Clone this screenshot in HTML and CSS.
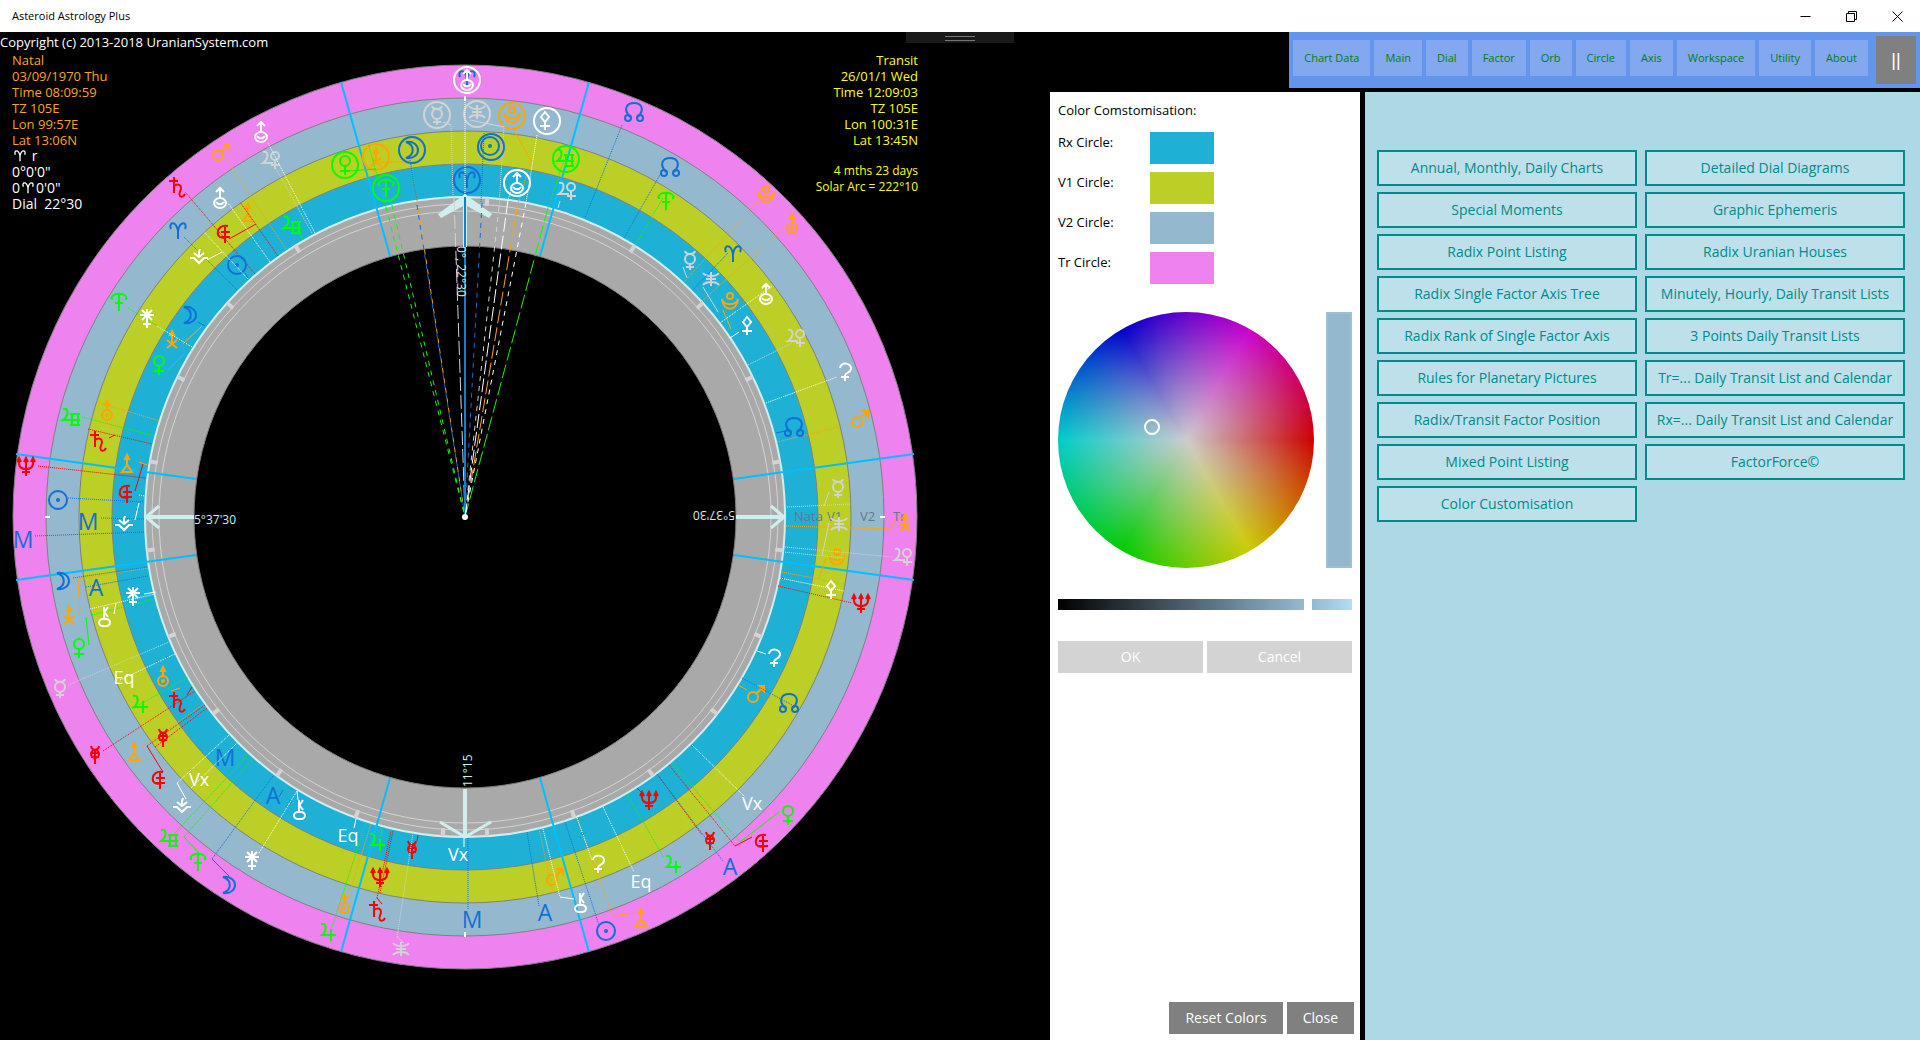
FILE: index.html
```html
<!DOCTYPE html>
<html lang="en">
<head>
<meta charset="utf-8">
<title>Asteroid Astrology Plus</title>
<link rel="stylesheet" href="styles.css">
</head>
<body>
<header class="titlebar">
  <h1 class="titlebar-name">Asteroid Astrology Plus</h1>
  <div class="window-buttons">
    <button class="window-button" aria-label="Minimize"><svg width="11" height="11" viewBox="0 0 11 11"><path d="M0.500 5.500H10.500"/></svg></button>
    <button class="window-button" aria-label="Restore"><svg width="11" height="11" viewBox="0 0 11 11"><path d="M.5 2.500H8.500V10.500H.5ZM2.500 2.500V.5H10.500V8.500H8.500"/></svg></button>
    <button class="window-button" aria-label="Close window"><svg width="11" height="11" viewBox="0 0 11 11"><path d="M.5.5L10.500 10.500M10.500.5L.5 10.500"/></svg></button>
  </div>
</header>
<main class="workspace">
  <section class="chart-pane" aria-label="Dial chart">
    <svg class="dial" viewBox="0 32 1050 1008" role="img" aria-label="22°30 dial with radix, V1, V2 and transit circles">
      <defs>
        <g id="sun"><circle r="9"/><circle r="1" class="dot"/></g>
        <g id="moon"><path d="M-6-8C10-10 10 10-6 8C3 5 3-5-6-8Z"/></g>
        <g id="mercury"><circle cy="-1" r="5"/><path d="M-5-9C-4-5 4-5 5-9M0 4V10M-4 7H4"/></g>
        <g id="venus"><circle cy="-4" r="5"/><path d="M0 1V10M-5 6H5"/></g>
        <g id="mars"><circle cx="-3" cy="3" r="5"/><path d="M1-1L8-8M3-8L8-8L8-3Z"/></g>
        <g id="jupiter"><path d="M-7-8C-1-10-1-1-6 3H8M3-3V9"/></g>
        <g id="saturn"><path d="M-9-7H0M-4-11V5M-4-2C0-5 3-3 3 0C3 3 0 5 2 8C4 10 6 8 7 6"/></g>
        <g id="uranus"><circle cy="5" r="5"/><circle cy="5" r="1" class="dot"/><path d="M0 0V-7M-2-5L0-9L2-5Z"/></g>
        <g id="neptune"><path d="M0-9V9M-4 5H4M-7-8C-8 0-5 2 0 2C5 2 8 0 7-8M-9-5L-7-9L-5-5M5-5L7-9L9-5M-2-5L0-9L2-5"/></g>
        <g id="pluto"><circle cy="-6" r="3"/><path d="M-8-3C-6 4 6 4 8-3C7 10-7 10-8-3"/></g>
        <g id="node"><path d="M-4 5C-12-4-6-9 0-9C6-9 12-4 4 5"/><circle cx="-6" cy="6" r="3"/><circle cx="6" cy="6" r="3"/></g>
        <g id="aries"><path d="M-7-2C-10-9-2-11 0 0V8V0C2-11 10-9 7-2"/></g>
        <g id="cupido"><path d="M-8-8C-2-10-2-1-8 3H2"/><circle cx="4" cy="-4" r="4"/><path d="M4 0V9M0 5H9"/></g>
        <g id="hades"><path d="M5-7C-8-10-9 9 4 4M2-6V10M-2-1H7M-2 4H7"/></g>
        <g id="zeus"><path d="M0-3V5M-2-4L0-8L2-4ZM-5 1L5 9M-5 9L0 5L5 1"/></g>
        <g id="kronos"><path d="M-8-3C-7-10 7-10 8-3M-8-3H-6M8-3H6M0-8V9M-4 1H4"/></g>
        <g id="apollon"><path d="M-8-8C-2-10-2-1-8 3H1M-1-3H9M-1 8H9M1-3V8M7-3V8M-1 3H9"/></g>
        <g id="admetos"><circle cy="0" r="4"/><path d="M-4-8C-3-3 3-3 4-8M0-3V10M-4-1H4M-4 3H4"/></g>
        <g id="vulkanus"><path d="M0-4V1M-2-5L0-9L2-5ZM-5 8L0 1L5 8Z"/></g>
        <g id="poseidon"><path d="M-8-6C-5-2 5-2 8-6M-8 6C-5 2 5 2 8 6M0-7V7M-5 0H5"/></g>
        <g id="ceres"><path d="M-5-4C-4-11 7-9 6-3C5 2 0 0 0 4V9M-4 5H4"/></g>
        <g id="pallas"><path d="M0-9L4-4L0 1L-4-4ZM0 1V9M-5 5H5"/></g>
        <g id="juno"><path d="M0-9V10M-7-3H7M-5-8L5 2M5-8L-5 2M-4 6H4"/></g>
        <g id="vesta"><path d="M-9 1H-5L0 6L5 1H9M-5-4L0 0L5-4M0-1V-5L1-8"/></g>
        <g id="chiron"><rect x="-5" y="2" width="11" height="7" rx="4"/><path d="M0 2V-10M0-4L4-10M1-4L4 0"/></g>
        <g id="earth"><ellipse cy="5" rx="6" ry="5"/><path d="M0 1V-9M-4-6L0-10L4-6M-4 4C-2 7 2 7 4 4"/></g>
        <g id="halo"><circle r="13"/></g>
        <g id="major"><path d="M0-312V-320"/></g>
      </defs>

      <g class="rings">
        <circle class="ring-tr" cx="465" cy="517" r="452"/>
        <circle class="ring-v2" cx="465" cy="517" r="419"/>
        <circle class="ring-v1" cx="465" cy="517" r="386"/>
        <circle class="ring-rx" cx="465" cy="517" r="353"/>
        <circle class="ring-dial" cx="465" cy="517" r="320"/>
        <circle class="ring-line" cx="465" cy="517" r="313"/>
        <circle class="ring-line" cx="465" cy="517" r="306"/>
        <circle class="ring-core" cx="465" cy="517" r="271"/>
      </g>

      <g class="ticks" transform="translate(465 517)">
        <use href="#major" transform="rotate(4)"/><use href="#major" transform="rotate(32)"/><use href="#major" transform="rotate(48)"/><use href="#major" transform="rotate(64)"/><use href="#major" transform="rotate(80)"/><use href="#major" transform="rotate(96)"/><use href="#major" transform="rotate(112)"/><use href="#major" transform="rotate(128)"/><use href="#major" transform="rotate(144)"/><use href="#major" transform="rotate(160)"/><use href="#major" transform="rotate(176)"/>
        <use href="#major" transform="rotate(184)"/><use href="#major" transform="rotate(200)"/><use href="#major" transform="rotate(216)"/><use href="#major" transform="rotate(232)"/><use href="#major" transform="rotate(248)"/><use href="#major" transform="rotate(264)"/><use href="#major" transform="rotate(280)"/><use href="#major" transform="rotate(296)"/><use href="#major" transform="rotate(312)"/><use href="#major" transform="rotate(328)"/>
      </g>

      <g class="spokes"><path d="M341 82L390 256M589 82L540 256M341 952L390 778M589 952L540 778M16 454L196 479M914 454L734 479M16 580L196 555M914 580L734 555"/></g>

      <g class="pointers">
        <path d="M465 198V247M465 789V837M146 517H194M736 517H784"/>
        <path class="barb" d="M440 822L465 837L491 822M159 506L146 517L159 528M771 506L784 517L771 528"/>
        <path class="arrow-head" d="M465 194L492 214L489 218L465 205L441 218L438 214Z"/>
      </g>

      <g class="ring-names"><text x="794" y="521">Nata</text><text x="827" y="521">V1</text><text x="860" y="521">V2</text><text x="893" y="521">Tr</text></g>
      <path class="edge-marks" d="M45 517H50M880 517H885M465 932V937M465 96V101"/>

      <g class="orange">
        <path class="dots" d="M286 249L226 159M97 402L160 421M78 579L148 568M142 747L204 704M348 897L371 824M539 829L553 893M577 818L613 916M777 442L851 424M786 526L890 529M782 572L845 584M757 202L684 282M784 228L701 302M411 163L417 200M531 161L518 203"/>
        <path class="lead" d="M183 344L202 326M78 579L80 612M613 916L634 913M890 529L895 520M819 579L826 558M723 310L731 329M380 162H411M512 127L531 161M139 462L147 465M171 691L180 688M738 685L747 690"/>
        <path class="ray-long" d="M518 203L465 517"/><path class="ray-short" d="M417 200L465 517"/>
        <use href="#mars" x="221" y="152"/><use href="#vulkanus" x="248" y="213"/><use href="#zeus" x="172" y="339"/><use href="#zeus" x="376" y="157"/><use href="#halo" x="376" y="157"/><use href="#pluto" x="512" y="116"/><use href="#halo" x="512" y="116"/><use href="#pluto" x="766" y="195"/><use href="#uranus" x="792" y="223"/><use href="#pluto" x="730" y="302"/><use href="#uranus" x="107" y="410"/><use href="#vulkanus" x="127" y="464"/><use href="#zeus" x="69" y="615"/><use href="#uranus" x="163" y="676"/><use href="#vulkanus" x="134" y="752"/><use href="#uranus" x="344" y="903"/><use href="#mars" x="555" y="877"/><use href="#vulkanus" x="641" y="918"/><use href="#mars" x="756" y="694"/><use href="#mars" x="860" y="419"/><use href="#zeus" x="905" y="522"/><use href="#pluto" x="837" y="558"/>
      </g>

      <g class="green">
        <path class="dots" d="M192 347L128 308M82 417L154 436M92 615L154 599M132 709L188 677M175 833L247 756M184 837L253 759M332 927L366 822M627 794L664 858M672 763L740 842M663 198L635 246M368 143L386 207M381 190L392 205M563 163L548 208"/>
        <path class="lead" d="M168 370L185 353M86 617L89 645M184 837L199 853M740 842L779 812M349 171L376 169M382 827L381 837M299 233L303 240"/>
        <path class="ray-short" d="M386 207L465 517M392 205L465 517"/><path class="ray-long" d="M548 208L465 517"/>
        <use href="#apollon" x="292" y="225"/><use href="#kronos" x="119" y="302"/><use href="#venus" x="345" y="165"/><use href="#halo" x="345" y="165"/><use href="#kronos" x="386" y="188"/><use href="#halo" x="386" y="188"/><use href="#apollon" x="565" y="158"/><use href="#halo" x="566" y="159"/><use href="#kronos" x="666" y="201"/><use href="#venus" x="159" y="365"/><use href="#apollon" x="71" y="417"/><use href="#venus" x="79" y="648"/><use href="#jupiter" x="140" y="704"/><use href="#apollon" x="169" y="838"/><use href="#kronos" x="198" y="862"/><use href="#jupiter" x="377" y="842"/><use href="#jupiter" x="328" y="932"/><use href="#jupiter" x="673" y="864"/><use href="#venus" x="788" y="815"/>
      </g>

      <g class="red">
        <path class="dots" d="M278 256L240 202M255 274L185 192M88 429L152 444M38 466L146 478M103 751L195 691M147 746L205 705M155 747L207 708M380 893L393 831M377 898L391 831M657 774L702 835M669 765L735 846M778 586L852 603"/>
        <path class="lead" d="M229 239L256 224M109 438L115 435M135 491L143 464M147 746L163 772M735 846L752 837M377 898L382 904M187 695L192 687M418 835L417 841M637 788L641 792"/>
        <use href="#saturn" x="178" y="188"/><use href="#hades" x="223" y="233"/><use href="#saturn" x="99" y="442"/><use href="#neptune" x="26" y="467"/><use href="#hades" x="125" y="493"/><use href="#saturn" x="178" y="703"/><use href="#admetos" x="163" y="737"/><use href="#admetos" x="95" y="754"/><use href="#hades" x="158" y="779"/><use href="#admetos" x="412" y="849"/><use href="#neptune" x="380" y="878"/><use href="#saturn" x="378" y="912"/><use href="#neptune" x="649" y="801"/><use href="#admetos" x="710" y="840"/><use href="#hades" x="761" y="842"/><use href="#neptune" x="861" y="604"/>
      </g>

      <g class="silver">
        <path class="dots" d="M312 233L275 167M453 195L451 126M504 126L499 207M68 685L169 642M397 937L413 833M748 365L792 343M787 507L851 504M785 547L893 557M783 552L845 558"/>
        <path class="lead" d="M443 122L451 125M470 120L504 127M683 267L687 278M703 287L718 312M397 937L404 943M824 506L829 492M822 556L829 523M560 201L558 208"/>
        <path class="ray-long" d="M454 197L465 517"/><path class="ray-short" d="M499 207L465 517"/>
        <use href="#cupido" x="271" y="160"/><use href="#mercury" x="437" y="115"/><use href="#halo" x="437" y="115"/><use href="#poseidon" x="477" y="112"/><use href="#halo" x="477" y="114"/><use href="#cupido" x="567" y="191"/><use href="#mercury" x="690" y="260"/><use href="#poseidon" x="711" y="279"/><use href="#cupido" x="796" y="338"/><use href="#mercury" x="60" y="688"/><use href="#poseidon" x="401" y="949"/><use href="#mercury" x="838" y="488"/><use href="#poseidon" x="839" y="524"/><use href="#cupido" x="903" y="557"/>
      </g>

      <g class="blue">
        <path class="dots" d="M237 290L184 237M68 498L144 502M101 518L145 519M35 536L144 532M73 578L147 567M86 587L148 576M212 859L273 776M468 838L468 910M527 832L539 906M565 822L599 925M657 774L723 861M742 678L792 705M622 125L585 218M661 173L624 238M728 253L692 291M410 160L417 200M484 133L481 203"/>
        <path class="lead" d="M212 859L229 876M245 273L248 278M198 322L205 326M283 790L279 797M776 433L785 431"/>
        <path class="ray-short" d="M482 203L465 517M417 205L465 517"/>
        <path class="needle" d="M465 197V517"/>
        <use href="#aries" x="178" y="231"/><use href="#sun" x="237" y="265"/><use href="#moon" x="190" y="315"/><use href="#moon" x="412" y="150"/><use href="#halo" x="412" y="150"/><use href="#aries" x="467" y="180"/><use href="#halo" x="467" y="180"/><use href="#sun" x="490" y="146"/><use href="#halo" x="491" y="147"/><use href="#node" x="634" y="112"/><use href="#node" x="670" y="167"/><use href="#aries" x="733" y="254"/><use href="#sun" x="58" y="500"/><use href="#moon" x="63" y="581"/><use href="#moon" x="229" y="885"/><use href="#sun" x="606" y="931"/><use href="#node" x="789" y="703"/><use href="#node" x="794" y="427"/><use href="#aries" x="467" y="79"/>
        <text x="88" y="530">M</text><text x="23" y="548">M</text><text x="96" y="596">A</text><text x="225" y="766">M</text><text x="273" y="804">A</text><text x="472" y="928">M</text><text x="545" y="921">A</text><text x="730" y="875">A</text>
      </g>

      <g class="white">
        <path class="dots" d="M315 233L268 143M270 262L228 203M248 279L204 232M192 347L157 326M139 495L145 496M90 609L155 594M120 680L175 654M177 783L229 735M191 788L237 743M259 853L297 791M543 829L560 897M577 818L592 860M603 807L634 872M692 745L745 797M772 286L720 323M766 403L837 377M780 578L844 591M465 195V95M537 135L526 203M511 190L508 200"/>
        <path class="lead" d="M207 260L222 252M135 520L139 503M116 603L114 614M177 783L186 799M297 791L298 800M356 819L354 828M464 838V847M560 897L574 899M730 338L739 332M757 651L766 654M144 594L156 592"/>
        <path class="ray-long" d="M508 200L465 517"/><path class="ray-short" d="M526 203L465 517"/>
        <g class="bold"><use href="#earth" x="261" y="132"/><use href="#earth" x="220" y="198"/><use href="#vesta" x="199" y="257"/><use href="#juno" x="147" y="318"/><use href="#earth" x="467" y="80"/><use href="#halo" x="467" y="80"/><use href="#pallas" x="545" y="121"/><use href="#halo" x="547" y="121"/><use href="#earth" x="517" y="183"/><use href="#halo" x="517" y="183"/><use href="#earth" x="766" y="294"/><use href="#pallas" x="747" y="326"/><use href="#ceres" x="845" y="372"/><use href="#vesta" x="124" y="524"/><use href="#juno" x="133" y="596"/><use href="#chiron" x="104" y="617"/><use href="#chiron" x="299" y="810"/><use href="#vesta" x="182" y="806"/><use href="#juno" x="252" y="860"/><use href="#chiron" x="580" y="903"/><use href="#ceres" x="598" y="864"/><use href="#ceres" x="774" y="658"/><use href="#pallas" x="831" y="590"/></g>
        <text x="124" y="684">Eq</text><text x="199" y="786">Vx</text><text x="348" y="842">Eq</text><text x="458" y="861">Vx</text><text x="641" y="888">Eq</text><text x="752" y="810">Vx</text>
        <circle class="hub" cx="465" cy="517" r="2"/>
      </g>

      <g class="degrees">
        <text x="194" y="524">5°37'30</text>
        <text transform="translate(735 511) rotate(180)">5°37'30</text>
        <text transform="translate(472 787) rotate(-90)">11°15</text>
        <text transform="translate(457 246) rotate(90)">0°, 22°30</text>
      </g>
    </svg>
    <p class="copyright">Copyright (c) 2013-2018 UranianSystem.com</p>
    <div class="natal">
      <p>Natal</p><p>03/09/1970 Thu</p><p>Time 08:09:59</p><p>TZ 105E</p><p>Lon 99:57E</p><p>Lat 13:06N</p>
      <div class="reading">
        <p><svg class="sign" viewBox="-9 -9 18 18" role="img" aria-label="Aries"><use href="#aries"/></svg> r</p><p>0°0'0"</p><p>0<svg class="sign" viewBox="-9 -9 18 18" role="img" aria-label="Aries"><use href="#aries"/></svg>0'0"</p><p>Dial&nbsp; 22°30</p>
      </div>
    </div>
    <div class="transit">
      <p>Transit</p><p>26/01/1 Wed</p><p>Time 12:09:03</p><p>TZ 105E</p><p>Lon 100:31E</p><p>Lat 13:45N</p>
      <div class="arc"><p>4 mths 23 days</p><p>Solar Arc = 222°10</p></div>
    </div>
    <div class="grip"></div>
  </section>

  <nav class="menu" aria-label="Main menu">
    <button class="menu-item">Chart Data</button><button class="menu-item">Main</button><button class="menu-item">Dial</button><button class="menu-item">Factor</button><button class="menu-item">Orb</button><button class="menu-item">Circle</button><button class="menu-item">Axis</button><button class="menu-item">Workspace</button><button class="menu-item">Utility</button><button class="menu-item">About</button>
    <button class="pause">||</button>
  </nav>

  <section class="colors">
    <h2 class="colors-title">Color Comstomisation:</h2>
    <div class="swatches">
      <label for="rx">Rx Circle:</label><button id="rx" class="swatch rx" aria-label="Rx Circle"></button>
      <label for="v1">V1 Circle:</label><button id="v1" class="swatch v1" aria-label="V1 Circle"></button>
      <label for="v2">V2 Circle:</label><button id="v2" class="swatch v2" aria-label="V2 Circle"></button>
      <label for="tr">Tr Circle:</label><button id="tr" class="swatch tr" aria-label="Tr Circle"></button>
    </div>
    <div class="picker">
      <div class="wheel"><span class="wheel-mark"></span></div>
      <input type="range" class="opacity" aria-label="Opacity" value="100">
    </div>
    <div class="levels">
      <input type="range" class="level dark" aria-label="Shade">
      <input type="range" class="level light" aria-label="Tint">
    </div>
    <div class="confirm"><button class="confirm-button">OK</button><button class="confirm-button">Cancel</button></div>
    <div class="panel-actions"><button class="action">Reset Colors</button><button class="action">Close</button></div>
  </section>

  <section class="tools" aria-label="Workspace tools">
    <div class="tool-column">
      <button class="tool">Annual, Monthly, Daily Charts</button>
      <button class="tool">Special Moments</button>
      <button class="tool">Radix Point Listing</button>
      <button class="tool">Radix Single Factor Axis Tree</button>
      <button class="tool">Radix Rank of Single Factor Axis</button>
      <button class="tool">Rules for Planetary Pictures</button>
      <button class="tool">Radix/Transit Factor Position</button>
      <button class="tool">Mixed Point Listing</button>
      <button class="tool">Color Customisation</button>
    </div>
    <div class="tool-column">
      <button class="tool">Detailed Dial Diagrams</button>
      <button class="tool">Graphic Ephemeris</button>
      <button class="tool">Radix Uranian Houses</button>
      <button class="tool">Minutely, Hourly, Daily Transit Lists</button>
      <button class="tool">3 Points Daily Transit Lists</button>
      <button class="tool">Tr=... Daily Transit List and Calendar</button>
      <button class="tool">Rx=... Daily Transit List and Calendar</button>
      <button class="tool">FactorForce©</button>
    </div>
  </section>
</main>
</body>
</html>
```
FILE: styles.css
```css
* { box-sizing: border-box; }
body {
  margin: 0;
  min-height: 100vh;
  display: flex;
  flex-direction: column;
  background: #000;
  font-family: "Open Sans", "Noto Sans", sans-serif;
  font-size: 13px;
  line-height: 16px;
}
h1, h2, p { margin: 0; font-weight: 400; }
button { border: 0; margin: 0; padding: 0; font: inherit; }

.titlebar { display: flex; justify-content: space-between; align-items: center; height: 32px; background: #fff; }
.titlebar-name { padding-left: 12px; font-size: 11px; }
.window-buttons { display: flex; }
.window-button { width: 46px; height: 32px; background: none; display: grid; place-items: center; }
.window-button svg { fill: none; stroke: #000; }

.workspace {
  flex: 1;
  display: grid;
  grid-template-columns: minmax(0, 1fr) 310px 560px;
  grid-template-rows: 56px 1fr;
  row-gap: 4px;
  grid-template-areas: "chart menu menu" "chart colors tools";
}
.chart-pane { grid-area: chart; position: relative; color: #fff; }
.dial { display: block; width: 100%; height: auto; }
.copyright { position: absolute; left: 0; top: 2px; }
.natal { position: absolute; left: 12px; top: 20px; color: orange; }
.reading { color: #fff; font-size: 14px; }
.transit { position: absolute; right: 132px; top: 20px; color: #ff0; text-align: right; }
.arc { padding-top: 15px; font-size: 12px; }
.sign { width: 16px; height: 12px; vertical-align: -1px; fill: none; stroke: #fff; stroke-width: 2px; }
.grip { position: absolute; right: 36px; top: 0; width: 108px; height: 11px; background: #1a1a1a; }
.grip::after { content: ""; display: block; width: 30px; height: 3px; margin: 4px auto 0; border: solid #777; border-width: 1px 0; }

.menu { grid-area: menu; justify-self: end; display: flex; align-items: flex-start; gap: 4px; padding: 4px; background: #6495ed; }
.menu-item { height: 36px; margin-top: 4px; padding: 0 11px; background: #83a8f0; color: #007f0e; font-size: 11px; }
.pause { width: 40px; height: 48px; margin-left: 4px; background: gray; color: #fff; font-family: "Liberation Sans", sans-serif; font-size: 18px; }

.colors { grid-area: colors; display: flex; flex-direction: column; padding: 8px 8px 6px; background: #fff; color: #000; }
.colors-title { font-size: 13px; line-height: 20px; }
.swatches { display: grid; grid-template-columns: 92px 64px; row-gap: 8px; margin-top: 12px; line-height: 20px; }
.swatch { height: 32px; }
.rx { background: #1fb1d5; }
.v1 { background: #bbcf26; }
.v2 { background: #94b9cf; }
.tr { background: #ee82ee; }
.picker { display: flex; justify-content: space-between; margin-top: 28px; }
.wheel {
  position: relative;
  width: 256px;
  height: 256px;
  border-radius: 50%;
  background:
    radial-gradient(closest-side, #ccc, rgba(204, 204, 204, 0)),
    conic-gradient(from 90deg, #cc0000, #cccc00, #00cc00, #00cccc, #0000cc, #cc00cc, #cc0000);
}
.wheel-mark { position: absolute; left: 86px; top: 107px; width: 16px; height: 16px; border: 2px solid #fff; border-radius: 50%; }
input[type="range"] { appearance: none; margin: 0; }
input[type="range"]::-webkit-slider-thumb { appearance: none; width: 0; height: 0; }
.opacity { width: 26px; height: 256px; background: #94b9cf; border: 2px solid #9dc0d5; }
.levels { display: flex; gap: 8px; margin-top: 31px; }
.level { height: 11px; min-width: 0; }
.dark { flex: 1; background: linear-gradient(90deg, #000, #94b9cf); }
.light { width: 40px; background: linear-gradient(90deg, #94b9cf, #b0def5); }
.confirm { display: flex; gap: 4px; margin-top: 31px; }
.confirm-button { flex: 1; height: 32px; background: #d3d3d3; color: #fff; font-size: 14px; }
.panel-actions { display: flex; justify-content: flex-end; gap: 4px; margin-top: auto; margin-right: -2px; }
.action { height: 32px; padding: 0 16px; background: gray; color: #fff; font-size: 14px; }

.tools { grid-area: tools; display: flex; align-items: flex-start; gap: 8px; margin-left: 5px; padding: 58px 15px 8px 12px; background: #add8e6; }
.tool-column { flex: 1; display: flex; flex-direction: column; gap: 6px; }
.tool { height: 36px; border: 2px solid #008b8b; background: #bde0ea; color: #008b8b; font-size: 14px; white-space: nowrap; }

.dial use, .dial path { fill: none; }
.rings circle { stroke: gray; }
.ring-tr { fill: #ee82ee; }
.ring-v2 { fill: #94b9cf; }
.ring-v1 { fill: #bbcf26; }
.ring-rx { fill: #1fb1d5; }
.rings .ring-dial { fill: #a9a9a9; stroke: #d0eeee; stroke-width: 2px; }
.rings .ring-line { fill: none; stroke: #d3d3d3; }
.ring-core { fill: #000; }
.ticks { stroke: #d3d3d3; stroke-width: 4px; fill: none; }
.spokes { stroke: #00bfff; stroke-width: 2px; }
.pointers { stroke: #d0eeee; stroke-width: 4px; }
.barb { stroke-width: 3px; }
.dial .arrow-head { fill: #d0eeee; stroke: none; }
.edge-marks { stroke: #fff; stroke-width: 2px; }
.ring-names { fill: #66788a; font-size: 13px; }
.degrees { fill: #d0eeee; font-size: 12px; }
.orange { color: orange; }
.green { color: #0f0; }
.red { color: red; }
.silver { color: #d3d3d3; }
.blue { color: #1070d8; }
.white { color: #fff; }
.orange, .green, .red, .silver, .blue, .white { stroke: currentColor; stroke-width: 2px; fill: none; }
.dial .dot { fill: currentColor; }
.hub { fill: currentColor; }
.dots { stroke-width: 1px; stroke-dasharray: 1 1; }
.lead { stroke-width: 1px; }
.ray-short { stroke-width: 1px; stroke-dasharray: 5 5; }
.ray-long { stroke-width: 1px; stroke-dasharray: 14 4; }
.needle { stroke: #1080d0; }
.blue text, .white text { stroke: none; fill: currentColor; text-anchor: middle; font-size: 23px; }
.white text { font-size: 18px; }
```
